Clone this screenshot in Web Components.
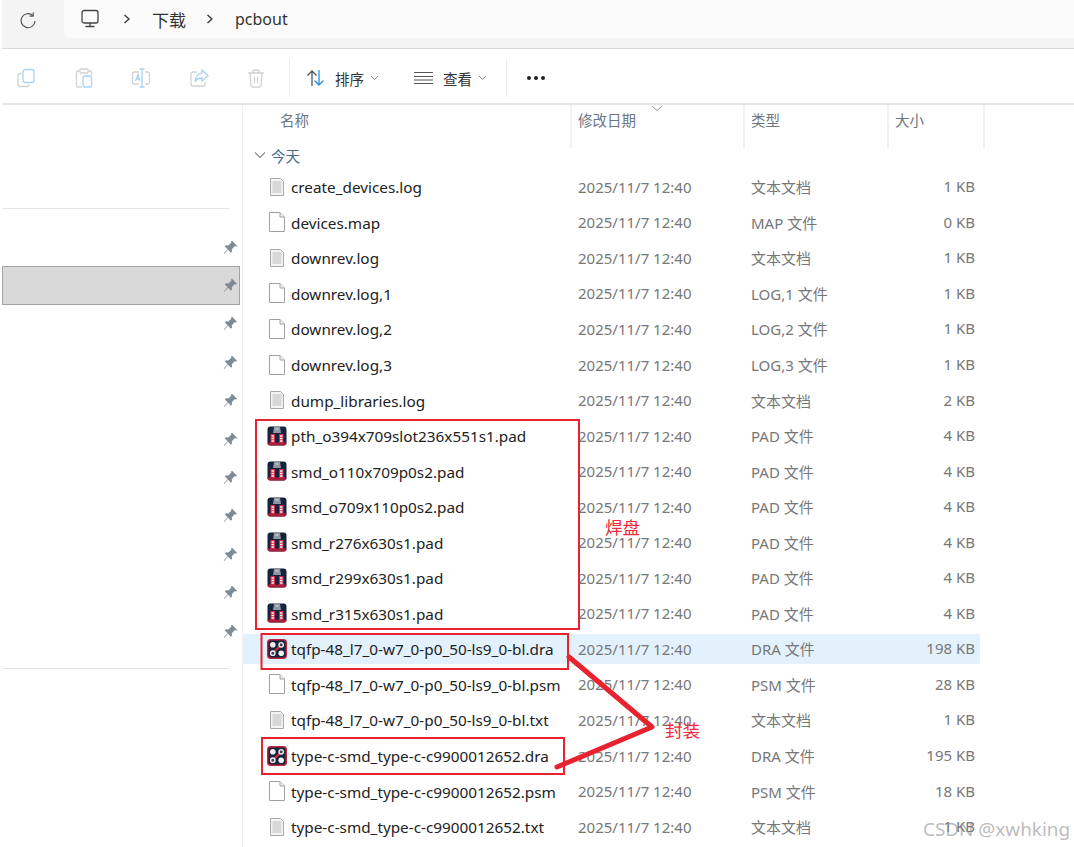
<!DOCTYPE html>
<html>
<head>
<meta charset="utf-8">
<title>pcbout</title>
<style>
  html, body { margin: 0; padding: 0; background: #fff; }
  body { width: 1074px; height: 847px; overflow: hidden; position: relative;
    font-family: "Noto Sans", "Noto Sans CJK SC", sans-serif; }
</style>
</head>
<body>
<file-explorer>
  <address-bar slot="address"></address-bar>
  <tool-bar slot="tools"></tool-bar>
  <side-pane slot="side"></side-pane>
  <file-list slot="files"></file-list>
</file-explorer>
<note-layer></note-layer>

<script>
const CJK = '"Noto Sans", "Noto Sans CJK SC", sans-serif';

class FileExplorer extends HTMLElement {
  constructor() {
    super();
    this.attachShadow({mode: 'open'}).innerHTML = `
      <style>
        :host { display: grid; grid-template-columns: 243px 1fr; grid-template-rows: 49px 56px 1fr; height: 847px; }
        .top { grid-column: 1 / 3; }
      </style>
      <div class="top"><slot name="address"></slot></div>
      <div class="top"><slot name="tools"></slot></div>
      <slot name="side"></slot>
      <slot name="files"></slot>`;
  }
}

class AddressBar extends HTMLElement {
  constructor() {
    super();
    const sep = '<svg width="8" height="12" viewBox="0 0 8 12" fill="none" stroke="#333" stroke-width="1.3"><path d="M1.5 2l4.5 4-4.5 4"/></svg>';
    this.attachShadow({mode: 'open'}).innerHTML = `
      <style>
        :host { display: flex; box-sizing: border-box; height: 49px; margin-left: 2px; background: #f5f4f4; border-bottom: 1px solid #dcd6d9; color: #333; }
        .reload { width: 62px; display: flex; padding: 11px 0 0 16px; box-sizing: border-box; }
        .crumbs { flex: 1; height: 38px; background: #fbfbfb; border-radius: 0 0 0 6px; display: flex; align-items: center; padding-left: 16px; font: 16px ${CJK}; }
        .sep { margin: 0 21px 0 23px; display: flex; }
        .sep.b { margin: 0 21px 0 20px; }
        .cn { font-size: 17px; }
      </style>
      <div class="reload">
        <svg width="20" height="20" viewBox="0 0 20 20" fill="none" stroke="#555" stroke-width="1.2"><path d="M14.8 4.6A7 7 0 1 0 17 10"/><path d="M15.2 1.6v3.6h-3.6"/></svg>
      </div>
      <div class="crumbs">
        <svg width="20" height="20" viewBox="0 0 20 20" fill="none" stroke="#444" stroke-width="1.3"><rect x="2" y="1.5" width="16" height="12.5" rx="2"/><path d="M10 14v3M5.5 17.5h9"/></svg>
        <span class="sep">${sep}</span>
        <span class="cn">下载</span>
        <span class="sep b">${sep}</span>
        <span>pcbout</span>
      </div>`;
  }
}

class ToolBar extends HTMLElement {
  constructor() {
    super();
    const chev = '<svg width="9" height="6" viewBox="0 0 9 6" fill="none" stroke="#888" stroke-width="1"><path d="M1 1l3.5 3.5L8 1"/></svg>';
    this.attachShadow({mode: 'open'}).innerHTML = `
      <style>
        :host { display: flex; align-items: center; box-sizing: border-box; height: 56px; margin-left: 2px; padding: 4px 0 0 14px; border-bottom: 2px solid #e7e3e5; font: 14.5px ${CJK}; color: #333; }
        .icon { width: 20px; height: 20px; display: flex; margin-right: 37.5px; }
        .div { width: 1px; height: 38px; background: #ededed; }
        .act { display: flex; align-items: center; }
        .act span { margin: 0 6px 0 9px; }
        .dots { display: flex; gap: 3px; margin-left: 20px; }
        .dots i { width: 4px; height: 4px; border-radius: 50%; background: #222; }
      </style>
      <div class="icon"><svg width="20" height="20" viewBox="0 0 20 20" fill="none" stroke-width="1.3"><path d="M6 5.5H4a2 2 0 0 0-2 2v9a2 2 0 0 0 2 2h7a2 2 0 0 0 2-2" stroke="#cfd2d4"/><rect x="7" y="1.500" width="11" height="13" rx="2.5" stroke="#a9d3f5"/></svg></div>
      <div class="icon"><svg width="20" height="20" viewBox="0 0 20 20" fill="none" stroke-width="1.3"><path d="M6 3H4a1.500 1.500 0 0 0-1.500 1.500v13A1.500 1.500 0 0 0 4 19h4M14 3h2a1.500 1.500 0 0 1 1.500 1.500V7" stroke="#cfd2d4"/><rect x="6" y="1" width="8" height="4" rx="1" stroke="#cfd2d4"/><rect x="9" y="8" width="8.500" height="11" rx="1.500" stroke="#a9d3f5"/></svg></div>
      <div class="icon"><svg width="20" height="20" viewBox="0 0 20 20" fill="none" stroke-width="1.3"><path d="M8 4H3a1.500 1.500 0 0 0-1.500 1.500v9A1.500 1.500 0 0 0 3 16h5M14 4h3a1.500 1.500 0 0 1 1.500 1.500v9A1.500 1.500 0 0 1 17 16h-3" stroke="#cfd2d4"/><path d="M11 1v18M8.500 1h5M8.500 19h5M4.500 13l2.500-6.500L9 13M5.500 11h3" stroke="#a9d3f5"/></svg></div>
      <div class="icon"><svg width="20" height="20" viewBox="0 0 20 20" fill="none" stroke-width="1.3"><path d="M8 4H4a2 2 0 0 0-2 2v10a2 2 0 0 0 2 2h10a2 2 0 0 0 2-2v-2" stroke="#cfd2d4"/><path d="M13 2l6 5.500-6 5.500V10c-4 0-6 1.500-7 4 0-5 3-8.500 7-9z" stroke="#a9d3f5"/></svg></div>
      <div class="icon" style="margin-right:23px"><svg width="20" height="20" viewBox="0 0 20 20" fill="none" stroke="#cfd2d4" stroke-width="1.3"><path d="M2 5h16M7 5V3a1 1 0 0 1 1-1h4a1 1 0 0 1 1 1v2M4 5l1 12.500A1.500 1.500 0 0 0 6.500 19h7a1.500 1.500 0 0 0 1.500-1.500L16 5M8.500 9v6M11.500 9v6"/></svg></div>
      <div class="div"></div>
      <div class="act" style="margin-left:16px">
        <svg width="20" height="20" viewBox="0 0 20 20" fill="none" stroke-width="1.3"><path d="M6 18V3M1.500 7.500L6 3l4.500 4.500" stroke="#555"/><path d="M13 2v15M8.500 12.500L13 17l4.500-4.500" stroke="#2b8fe0"/></svg>
        <span>排序</span>${chev}
      </div>
      <div class="act" style="margin-left:35px;margin-right:19px">
        <svg width="19" height="14" viewBox="0 0 19 14" fill="none" stroke="#555" stroke-width="1.2"><path d="M0 1.500h19M0 5.500h19M0 9h19M0 12.500h19"/></svg>
        <span style="margin-left:10px">查看</span>${chev}
      </div>
      <div class="div"></div>
      <div class="dots"><i></i><i></i><i></i></div>`;
  }
}

class SidePane extends HTMLElement {
  constructor() {
    super();
    const pin = '<svg width="15" height="15" viewBox="0 0 14 14" fill="#7f8b94"><path d="M8.500.8l4.700 4.700-1.300.6-1.100-.2-2.600 2.700.2 2.300-1 1-2.600-2.700L1 13l-.4-.4 3.800-3.900L1.700 6l1-1 2.300.2 2.700-2.600-.2-1.100z"/></svg>';
    let rows = '';
    for (let i = 0; i < 11; i++) rows += `<div class="row${i === 1 ? ' sel' : ''}">${pin}</div>`;
    this.attachShadow({mode: 'open'}).innerHTML = `
      <style>
        :host { display: block; box-sizing: border-box; border-right: 1px solid #f0f0f0; margin-left: 2px; padding-top: 103px; }
        hr { border: 0; height: 1px; background: #e3e3e3; margin: 0 12px 0 0; }
        .rows { padding-top: 19px; }
        .row { height: 38.4px; box-sizing: border-box; display: flex; align-items: center; justify-content: flex-end; padding-right: 2px; margin-right: 2px; }
        .sel { background: #d9d9d9; outline: 1px solid #a3a3a3; outline-offset: -1px; }
        .low { margin-top: 18px; }
      </style>
      <hr>
      <div class="rows">${rows}</div>
      <hr class="low">`;
  }
}

class FileRow extends HTMLElement {
  connectedCallback() {
    const kind = this.getAttribute('kind');
    const icons = {
      txt: `<svg width="20" height="20" viewBox="0 0 20 20"><path d="M3.500 1.500h10l3 3v14h-13z" fill="#f4f4f4" stroke="#a8a8a8"/><path d="M5.500 5h9M5.500 7h9M5.500 9h9M5.500 11h9M5.500 13h9M5.500 15h9" stroke="#bdbdbd" stroke-width="1"/></svg>`,
      blank: `<svg width="20" height="20" viewBox="0 0 20 20"><path d="M2.500 .5h10.500l4.500 4.500v14.500h-15z" fill="#fff" stroke="#a0a0a0"/><path d="M13 .5v4.500h4.500" fill="#f0f0f0" stroke="#a0a0a0"/></svg>`,
      pad: `<svg width="20" height="20" viewBox="0 0 20 20"><rect x=".5" y=".5" width="19" height="19" rx="3" fill="#15243a"/><path d="M.5 16.500v.5a2.500 2.500 0 0 0 2.500 2.500h14a2.500 2.500 0 0 0 2.500-2.500v-.5z" fill="#a81f3c"/><path d="M7 1h6l1 6H6z" fill="#8e97a3"/><path d="M8.500 3h3" stroke="#e4e4e4"/><path d="M3.500 8h4.500v9H3.500zM12 8h4.500v9H12z" fill="#d8274f"/><path d="M4.500 10h2.500M4.500 12.500h2.500M4.500 15h2.500M13 10h2.500M13 12.500h2.500M13 15h2.500" stroke="#f0f0f0" stroke-width="1.300"/></svg>`,
      dra: `<svg width="20" height="20" viewBox="0 0 20 20"><rect x=".75" y=".75" width="18.500" height="18.500" rx="3" fill="#16233a" stroke="#c0233f" stroke-width="1.500"/><path d="M5 15L15 5" stroke="#d5263f" stroke-width="2.200"/><circle cx="5.800" cy="5.800" r="2.800" fill="#eee"/><circle cx="14.200" cy="14.200" r="2.800" fill="#eee"/><circle cx="14.200" cy="5.800" r="2.200" fill="#3a4556" stroke="#eee" stroke-width="1.400"/><circle cx="5.800" cy="14.200" r="2.200" fill="#3a4556" stroke="#eee" stroke-width="1.400"/></svg>`
    };
    this.attachShadow({mode: 'open'}).innerHTML = `
      <style>
        :host { display: grid; grid-template-columns: 48px 287px 173px 1fr; align-items: center; height: 30px; margin-right: 94px; color: #777; border-radius: 2px; font: 15px ${CJK}; }
        :host([hot]) { background: #e3f1fd; }
        .ic { display: flex; justify-content: flex-end; padding-right: 4px; }
        .name { color: #222; white-space: nowrap; font-size: 15.3px; padding-top: 1px; }
        .right { display: flex; justify-content: space-between; padding-right: 5px; white-space: nowrap; }
      </style>
      <div class="ic">${icons[kind]}</div>
      <div class="name"><slot></slot></div>
      <div class="date">2025/11/7 12:40</div>
      <div class="right">
        <span>${this.getAttribute('type')}</span><span>${this.getAttribute('size')}</span>
      </div>`;
  }
}

class FileList extends HTMLElement {
  constructor() {
    super();
    const data = [
      ['txt','create_devices.log','文本文档','1 KB'],
      ['blank','devices.map','MAP 文件','0 KB'],
      ['txt','downrev.log','文本文档','1 KB'],
      ['blank','downrev.log,1','LOG,1 文件','1 KB'],
      ['blank','downrev.log,2','LOG,2 文件','1 KB'],
      ['blank','downrev.log,3','LOG,3 文件','1 KB'],
      ['txt','dump_libraries.log','文本文档','2 KB'],
      ['pad','pth_o394x709slot236x551s1.pad','PAD 文件','4 KB'],
      ['pad','smd_o110x709p0s2.pad','PAD 文件','4 KB'],
      ['pad','smd_o709x110p0s2.pad','PAD 文件','4 KB'],
      ['pad','smd_r276x630s1.pad','PAD 文件','4 KB'],
      ['pad','smd_r299x630s1.pad','PAD 文件','4 KB'],
      ['pad','smd_r315x630s1.pad','PAD 文件','4 KB'],
      ['dra','tqfp-48_l7_0-w7_0-p0_50-ls9_0-bl.dra','DRA 文件','198 KB',1],
      ['blank','tqfp-48_l7_0-w7_0-p0_50-ls9_0-bl.psm','PSM 文件','28 KB'],
      ['txt','tqfp-48_l7_0-w7_0-p0_50-ls9_0-bl.txt','文本文档','1 KB'],
      ['dra','type-c-smd_type-c-c9900012652.dra','DRA 文件','195 KB'],
      ['blank','type-c-smd_type-c-c9900012652.psm','PSM 文件','18 KB'],
      ['txt','type-c-smd_type-c-c9900012652.txt','文本文档','1 KB']
    ];
    const rows = data.map(d => `<file-row kind="${d[0]}" type="${d[2]}" size="${d[3]}"${d[4] ? ' hot' : ''}>${d[1]}</file-row>`).join('');
    this.attachShadow({mode: 'open'}).innerHTML = `
      <style>
        :host { display: block; font: 14.5px ${CJK}; color: #6b7683; }
        .head { display: grid; grid-template-columns: 329px 173px 144px 96px; height: 43px; }
        .head div { padding: 5px 0 0 6px; line-height: 20px; border-right: 2px solid #f1f1f1; box-sizing: border-box; position: relative; }
        .head div:first-child { padding-left: 37px; }
        .head svg { position: absolute; left: 79px; top: 0; }
        .group { display: flex; align-items: center; gap: 5px; height: 16px; margin: -1px 0 0 11px; color: #4a6a8a; }
        .rows { display: grid; grid-auto-rows: 35.55px; align-items: center; margin-top: 6px; }
      </style>
      <div class="head">
        <div>名称</div>
        <div>修改日期<svg width="12" height="7" viewBox="0 0 12 7" fill="none" stroke="#999"><path d="M1 1l5 4.500L11 1"/></svg></div>
        <div>类型</div>
        <div>大小</div>
      </div>
      <div class="group"><svg width="12" height="8" viewBox="0 0 12 8" fill="none" stroke="#888" stroke-width="1.100"><path d="M1 1.500l5 5 5-5"/></svg>今天</div>
      <div class="rows">${rows}</div>`;
  }
}

// red annotations and the watermark lie over the list
class NoteLayer extends HTMLElement {
  constructor() {
    super();
    this.attachShadow({mode: 'open'}).innerHTML = `
      <style>
        :host { position: absolute; inset: 0; pointer-events: none; }
        svg { position: absolute; inset: 0; }
        .t { position: absolute; color: #ee2b3a; font: 17.5px "Noto Sans CJK SC", sans-serif; }
        .mark { position: absolute; left: 923px; top: 816px; color: rgba(130,130,130,.55); font: 18.9px "Noto Sans", sans-serif; white-space: nowrap; }
      </style>
      <svg width="1074" height="847" fill="none" stroke="#e8222e">
        <rect x="256" y="420" width="323" height="209" stroke-width="2"/>
        <rect x="261.500" y="634" width="306.500" height="35" stroke-width="2"/>
        <rect x="262" y="738" width="302" height="36" stroke-width="2"/>
        <path d="M569 657L652 727L557 767" stroke-width="5" stroke-linejoin="round" stroke-linecap="round"/>
      </svg>
      <div class="t" style="left:605px;top:514px">焊盘</div>
      <div class="t" style="left:665px;top:717px">封装</div>
      <div class="mark">CSDN @xwhking</div>`;
  }
}

customElements.define('file-explorer', FileExplorer);
customElements.define('address-bar', AddressBar);
customElements.define('tool-bar', ToolBar);
customElements.define('side-pane', SidePane);
customElements.define('file-row', FileRow);
customElements.define('file-list', FileList);
customElements.define('note-layer', NoteLayer);
</script>
</body>
</html>
